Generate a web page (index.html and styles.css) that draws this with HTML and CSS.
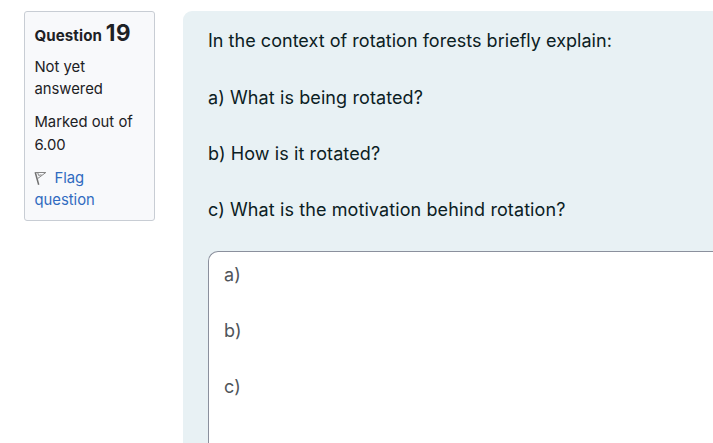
FILE: index.html
```html
<!DOCTYPE html>
<html lang="en">
<head>
<meta charset="utf-8">
<title>Question 19</title>
<link rel="stylesheet" href="styles.css">
</head>
<body>
<div class="question">
  <aside class="info">
    <h3 class="number">Question <span class="qno">19</span></h3>
    <div class="state">Not yet answered</div>
    <div class="grade">Marked out of 6.00</div>
    <a class="flag"><svg class="flag-icon" width="13" height="15" viewBox="0 0 13 15"><path d="M1.3 1.5 L4.7 13.8" fill="none" stroke="#707070" stroke-width="1.5"/><path d="M.8 1.5 H11.8 L3.6 7.6 M3.8 2 L4.6 4.4 L7.5 3.8" fill="none" stroke="#858585" stroke-width="1"/></svg>Flag question</a>
  </aside>
  <main class="content">
    <p class="intro">In the context of rotation forests briefly explain:</p>
    <p>a) What is being rotated?</p>
    <p>b) How is it rotated?</p>
    <p class="last">c) What is the motivation behind rotation?</p>
    <div class="answer">
      <p>a)</p>
      <p>b)</p>
      <p>c)</p>
    </div>
  </main>
</div>
</body>
</html>
```
FILE: styles.css
```css
* { box-sizing: border-box; }
body { margin: 0; height: 443px; overflow: hidden; background: #fff; font-family: Inter, sans-serif; color: #1d2125; }
.question { display: flex; gap: 28px; height: 443px; padding: 11px 0 0 24px; }
.info { flex: none; width: 131px; height: 210px; padding: 8px 9.4px; border: 1px solid #c8cdd4; border-radius: 3px; background: #f8f9fb; font-size: 14.85px; line-height: 22.4px; }
.number { margin: 0 0 7px; font-size: 15.1px; line-height: 26px; font-weight: 700; letter-spacing: .1px; white-space: nowrap; }
.qno { font-size: 22.4px; letter-spacing: .6px; }
.state, .grade { margin-bottom: 10.5px; }
.flag { display: block; color: #306bc0; }
.flag-icon { margin-right: 7px; vertical-align: -3px; }
.content { flex: 1; min-width: 0; display: flex; flex-direction: column; padding: 18px 0 0 25px; border-radius: 9px 0 0 0; background: #e8f1f4; color: #0b2023; font-size: 18px; line-height: 24px; letter-spacing: .1px; }
.content p { margin: 0 0 32.2px; white-space: nowrap; }
.content .intro { margin-bottom: 32.6px; letter-spacing: .03px; }
.content .last { margin-bottom: 29px; }
.answer { flex: 1; min-height: 0; padding: 11px 15px 0; border: 1px solid #8b909d; border-right: 0; border-bottom: 0; border-radius: 10px 0 0 0; background: #fff; color: #50555a; }
.answer p:last-child { margin-bottom: 0; }
```
